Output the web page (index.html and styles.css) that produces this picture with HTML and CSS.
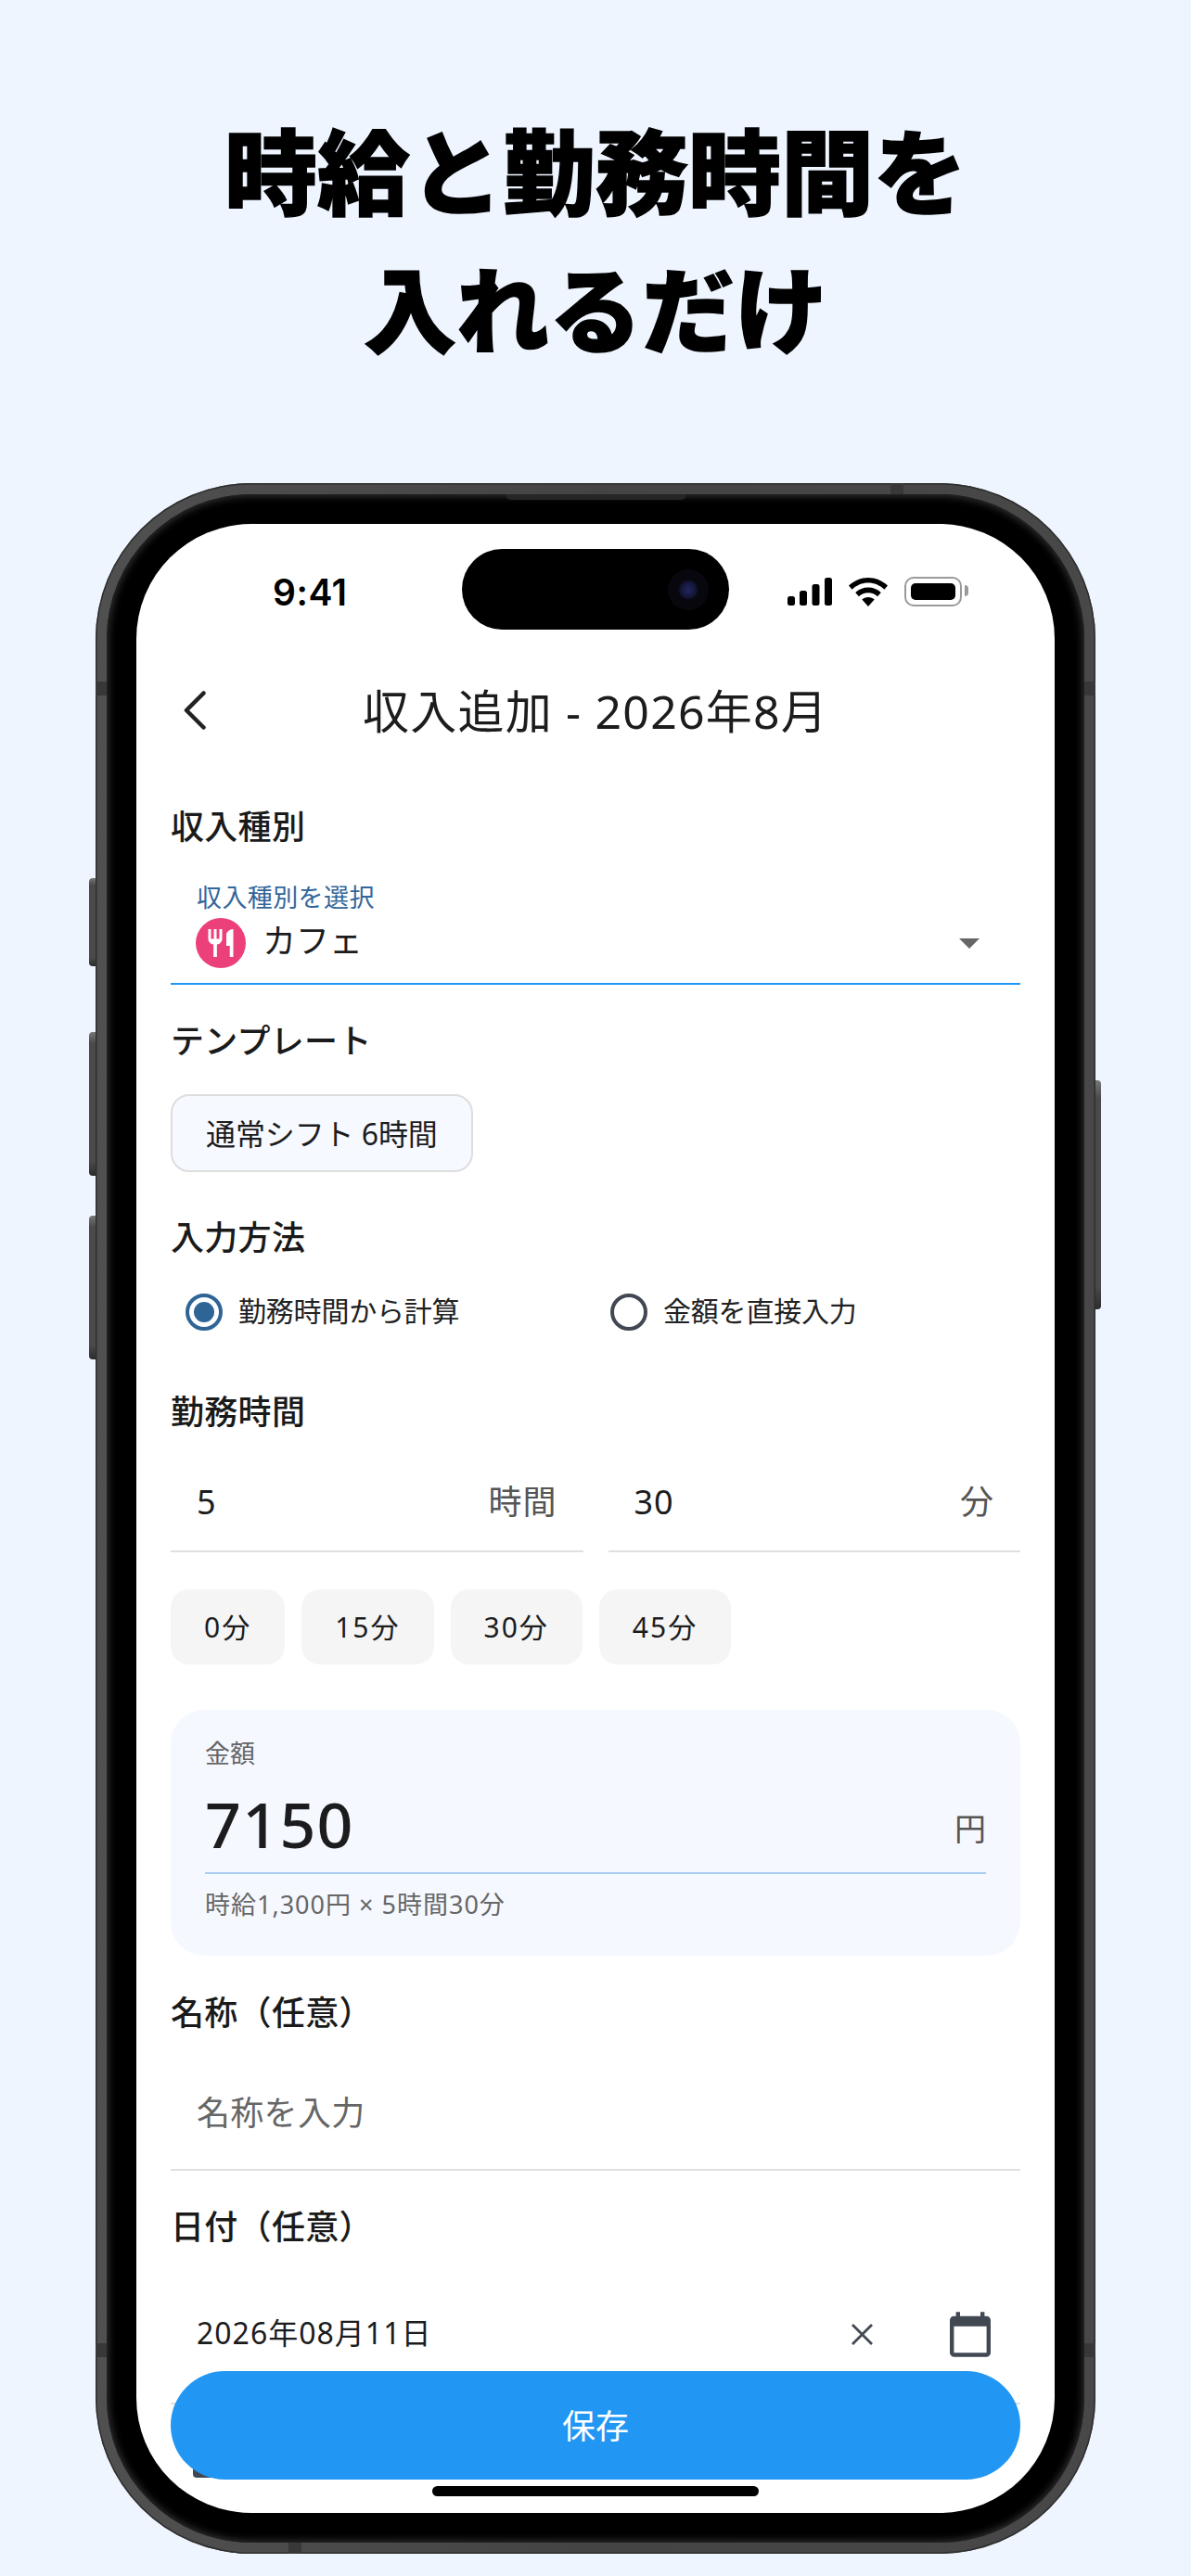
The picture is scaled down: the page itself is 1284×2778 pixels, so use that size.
FILE: index.html
```html
<!DOCTYPE html>
<html lang="ja">
<head>
    <meta charset="UTF-8">
    <meta name="viewport" content="width=device-width, initial-scale=1.0">
    <title>収入追加</title>
    <link rel="stylesheet" href="styles.css">
</head>
<body>

    <h1 class="headline">時給と勤務時間を<br>入れるだけ</h1>

    <div class="phone">
        <!-- hardware details on the frame -->
        <span class="side-btn side-mute"></span>
        <span class="side-btn side-up"></span>
        <span class="side-btn side-down"></span>
        <span class="side-btn side-power"></span>
        <span class="band band-left"></span>
        <span class="band band-right"></span>
        <span class="band band-left-low"></span>
        <span class="band band-right-low"></span>
        <span class="band band-top"></span>
        <span class="band band-bottom"></span>

        <div class="bezel">
            <span class="speaker"></span>
            <div class="screen">
                <div class="island"><span class="lens"></span></div>

                <div class="status-bar">
                    <span class="clock">9:41</span>
                    <div class="status-icons">
                        <svg class="icon-signal" viewBox="0 0 48 30">
                            <rect x="0" y="20" width="8" height="10" rx="2.5"/>
                            <rect x="13" y="14" width="8" height="16" rx="2.5"/>
                            <rect x="26.500" y="7" width="8" height="23" rx="2.5"/>
                            <rect x="40" y="0" width="8" height="30" rx="2.5"/>
                        </svg>
                        <svg class="icon-wifi" viewBox="0 0 42 31">
                            <path d="M21 0C13 0 6 3.100 0 8.500l3.600 4.200C8.600 8.200 14.500 5.600 21 5.600s12.400 2.600 17.400 7.100L42 8.500C36 3.100 29 0 21 0z"/>
                            <path d="M21 10.500c-5.300 0-10 2-13.800 5.400l3.700 4.300c2.800-2.400 6.200-3.900 10.100-3.900s7.300 1.500 10.100 3.900l3.700-4.300C31 12.500 26.300 10.500 21 10.500z"/>
                            <path d="M21 21c-2.600 0-4.900.9-6.700 2.500L21 31l6.700-7.500C25.900 21.900 23.600 21 21 21z"/>
                        </svg>
                        <div class="battery"><span class="battery-fill"></span></div>
                    </div>
                </div>

                <div class="nav">
                    <svg class="back" viewBox="0 0 24 42">
                        <path d="M21.500 2.500 3 21l18.500 18.500" fill="none" stroke="#222" stroke-width="4.500" stroke-linecap="round" stroke-linejoin="round"/>
                    </svg>
                    <div class="nav-title">収入追加 - 2026年8月</div>
                </div>

                <div class="form">
                    <div class="label label-type">収入種別</div>
                    <div class="select">
                        <div class="select-label">収入種別を選択</div>
                        <div class="select-row">
                            <span class="cat-icon">
                                <svg viewBox="0 0 24 24"><path d="M11 9H9V2H7v7H5V2H3v7c0 2.120 1.660 3.840 3.750 3.970V22h2.500v-9.030C11.340 12.840 13 11.120 13 9V2h-2v7zm5-3v8h2.500v8H21V2c-2.760 0-5 2.240-5 4z"/></svg>
                            </span>
                            <span class="select-value">カフェ</span>
                            <span class="caret"></span>
                        </div>
                    </div>

                    <div class="label label-template">テンプレート</div>
                    <div class="template-chip">通常シフト 6時間</div>

                    <div class="label label-method">入力方法</div>
                    <div class="radios">
                        <div class="radio-item">
                            <span class="radio radio-on"></span>
                            <span class="radio-text">勤務時間から計算</span>
                        </div>
                        <div class="radio-item">
                            <span class="radio"></span>
                            <span class="radio-text">金額を直接入力</span>
                        </div>
                    </div>

                    <div class="label label-hours">勤務時間</div>
                    <div class="time-fields">
                        <div class="time-field"><span>5</span><span class="suffix">時間</span></div>
                        <div class="time-field"><span>30</span><span class="suffix">分</span></div>
                    </div>
                    <div class="quick-chips">
                        <div class="quick-chip">0分</div>
                        <div class="quick-chip">15分</div>
                        <div class="quick-chip">30分</div>
                        <div class="quick-chip">45分</div>
                    </div>

                    <div class="amount-card">
                        <div class="amount-label">金額</div>
                        <div class="amount-row">
                            <span class="amount-value">7150</span>
                            <span class="amount-unit">円</span>
                        </div>
                        <div class="amount-hint">時給1,300円 × 5時間30分</div>
                    </div>

                    <div class="label label-name">名称（任意）</div>
                    <div class="text-field">名称を入力</div>

                    <div class="label label-date">日付（任意）</div>
                    <div class="date-field">
                        <span class="date-value">2026年08月11日</span>
                        <svg class="icon-clear" viewBox="0 0 25 25">
                            <path d="M2 2l21 21M23 2 2 23" fill="none" stroke="#424852" stroke-width="2.800"/>
                        </svg>
                        <svg class="icon-calendar" viewBox="2 1 20 22">
                            <path fill="#424852" d="M20 3h-1V1h-2v2H7V1H5v2H4c-1.100 0-2 .9-2 2v16c0 1.100.9 2 2 2h16c1.100 0 2-.9 2-2V5c0-1.100-.9-2-2-2zm0 18H4V8h16v13z"/>
                        </svg>
                    </div>
                    <div class="next-peek"></div>
                </div>

                <div class="save-btn">保存</div>
                <span class="home-bar"></span>
            </div>
        </div>
    </div>

</body>
</html>
```

FILE: styles.css
```css
* {
    box-sizing: border-box;
}

html, body {
    margin: 0;
    height: 2778px;
    overflow: hidden;
}

body {
    background: #eef5ff;
    font-family: "Noto Sans", "Noto Sans CJK JP", sans-serif;
    color: #1c1c1e;
    padding-top: 106px;
}

.headline {
    margin: 0;
    font-family: "Noto Sans CJK JP", sans-serif;
    font-size: 100px;
    font-weight: 900;
    line-height: 149px;
    text-align: center;
    color: #000;
    -webkit-text-stroke: 1.5px #000;
}

/* phone frame */
.phone {
    position: relative;
    width: 1078px;
    height: 2233px;
    margin: 117px 0 0 103px;
    padding: 12px;
    border-radius: 168px;
    background: linear-gradient(90deg, #505050, #444 50%, #484848);
    box-shadow: inset 0 0 0 1.500px #2e2e2e;
}

.bezel {
    position: relative;
    height: 100%;
    padding: 32px;
    border-radius: 156px;
    background: #000;
    box-shadow: inset 0 0 9px 2px #333;
}

.speaker {
    position: absolute;
    top: 0;
    left: 430px;
    width: 195px;
    height: 6px;
    border-radius: 0 0 6px 6px;
    background: #262626;
}

.side-btn {
    position: absolute;
    left: -7px;
    width: 7px;
    height: 155px;
    border-radius: 4px 0 0 4px;
    background: linear-gradient(180deg, #777, #4a4a4a 8%, #4a4a4a 90%, #2c2c2c);
}

.side-mute {
    top: 426px;
    height: 95px;
}

.side-up {
    top: 592px;
}

.side-down {
    top: 790px;
}

.side-power {
    left: auto;
    right: -6px;
    top: 644px;
    width: 6px;
    height: 247px;
    border-radius: 0 4px 4px 0;
}

.band {
    position: absolute;
    background: #383838;
}

.band-left, .band-right, .band-left-low, .band-right-low {
    width: 12px;
    height: 15px;
}

.band-left {
    left: 0;
    top: 214px;
}

.band-right {
    right: 0;
    top: 214px;
}

.band-left-low {
    left: 0;
    top: 2006px;
}

.band-right-low {
    right: 0;
    top: 2006px;
}

.band-top {
    top: 0;
    left: 857px;
    width: 14px;
    height: 12px;
}

.band-bottom {
    bottom: 0;
    left: 208px;
    width: 14px;
    height: 12px;
}

/* screen */
.screen {
    position: relative;
    height: 100%;
    overflow: hidden;
    border-radius: 124px;
    background: #fff;
}

.island {
    position: absolute;
    top: 27px;
    left: 351px;
    width: 288px;
    height: 87px;
    border-radius: 44px;
    background: #000;
}

.lens {
    position: absolute;
    top: 22px;
    right: 22px;
    width: 44px;
    height: 44px;
    border-radius: 50%;
    background: radial-gradient(circle, #20275c 0, #141638 26%, #08070e 36%);
}

.status-bar {
    display: flex;
    align-items: center;
    justify-content: space-between;
    height: 146px;
    padding: 0 100px 0 147px;
}

.clock {
    font-family: Inter, sans-serif;
    font-size: 39px;
    font-weight: 600;
    letter-spacing: 0.5px;
    color: #000;
}

.status-icons {
    display: flex;
    align-items: center;
    gap: 18px;
}

.icon-signal {
    width: 48px;
    height: 30px;
}

.icon-wifi {
    width: 42px;
    height: 31px;
}

.battery {
    position: relative;
    width: 62px;
    height: 32px;
    padding: 5px;
    border: 2.500px solid #9a9a9a;
    border-radius: 10px;
}

.battery::after {
    content: "";
    position: absolute;
    top: 7px;
    right: -9px;
    width: 4px;
    height: 12px;
    border-radius: 0 4px 4px 0;
    background: #9a9a9a;
}

.battery-fill {
    display: block;
    height: 100%;
    border-radius: 5px;
    background: #000;
}

.nav {
    display: grid;
    grid-template-columns: 1fr auto 1fr;
    align-items: center;
    height: 110px;
    padding: 0 51px;
}

.back {
    width: 24px;
    height: 42px;
}

.nav-title {
    padding-bottom: 4px;
    font-size: 50px;
    letter-spacing: 1.2px;
    color: #1c1c1e;
}

/* form */
.form {
    padding: 0 37px;
}

.label {
    font-size: 36px;
    font-weight: 500;
    letter-spacing: 0.3px;
    line-height: 48px;
    color: #1a1a1a;
}

.label-type {
    margin-top: 47px;
}

.label-template {
    margin-top: 37px;
}

.label-method {
    margin-top: 47px;
}

.label-hours {
    margin-top: 64px;
}

.label-name {
    margin-top: 38px;
}

.label-date {
    margin-top: 37px;
}

.select {
    margin-top: 35px;
    padding: 0 28px 16px;
    border-bottom: 2px solid #2196f3;
}

.select-label {
    font-size: 27px;
    letter-spacing: 0.4px;
    line-height: 34px;
    color: #33669a;
}

.select-row {
    display: flex;
    align-items: center;
    height: 54px;
    margin: 5px 0 0 -1px;
}

.cat-icon {
    display: flex;
    align-items: center;
    justify-content: center;
    width: 54px;
    height: 54px;
    border-radius: 50%;
    background: #ec407a;
}

.cat-icon svg {
    width: 36px;
    height: 36px;
    fill: #fff;
}

.select-value {
    margin-left: 18px;
    padding-bottom: 5px;
    font-size: 36px;
    line-height: 44px;
}

.caret {
    margin-left: auto;
    margin-right: 16px;
    border-left: 11px solid transparent;
    border-right: 11px solid transparent;
    border-top: 11px solid #666;
}

.template-chip {
    display: inline-flex;
    align-items: center;
    height: 84px;
    margin-top: 33px;
    padding: 0 36px 2px;
    border: 2px solid #ddd;
    border-radius: 20px;
    background: #f6f9ff;
    font-size: 32px;
    letter-spacing: -0.1px;
}

.radios {
    display: flex;
    margin-top: 36px;
}

.radio-item {
    display: flex;
    align-items: center;
    gap: 17px;
    width: 458px;
    height: 40px;
    padding-left: 16px;
    font-size: 30px;
    letter-spacing: -0.2px;
    color: #222;
}

.radio-text {
    padding-bottom: 3px;
    line-height: 34px;
}

.radio {
    width: 40px;
    height: 40px;
    border: 4px solid #424852;
    border-radius: 50%;
}

.radio-on {
    padding: 5px;
    border-color: #2f6496;
    background: #2f6496 content-box;
}

.time-fields {
    display: flex;
    gap: 27px;
    margin-top: 48px;
}

.time-field {
    display: flex;
    flex: 1;
    justify-content: space-between;
    padding: 0 28px 27px;
    border-bottom: 2px solid #e0e0e0;
    font-size: 36px;
    letter-spacing: 1px;
    line-height: 50px;
}

.suffix {
    color: #555;
}

.quick-chips {
    display: flex;
    gap: 18px;
    margin-top: 40px;
}

.quick-chip {
    display: flex;
    align-items: center;
    height: 81px;
    padding: 0 36px 3px;
    border-radius: 20px;
    background: #f5f5f5;
    font-size: 30px;
    letter-spacing: 2px;
}

.amount-card {
    height: 265px;
    margin-top: 49px;
    padding: 30px 37px 0;
    border-radius: 36px;
    background: #f5f8ff;
}

.amount-label {
    font-size: 27px;
    line-height: 34px;
    color: #666;
}

.amount-row {
    display: flex;
    align-items: center;
    justify-content: space-between;
    height: 96px;
    margin-top: 17px;
    padding-bottom: 10px;
    border-bottom: 2px solid #a9cdf0;
}

.amount-value {
    font-size: 68px;
    font-weight: 500;
    letter-spacing: 1.3px;
    line-height: 84px;
    color: #1c1c1e;
}

.amount-unit {
    padding-top: 10px;
    font-size: 34px;
    line-height: 60px;
    color: #555;
}

.amount-hint {
    margin-top: 16px;
    font-size: 27px;
    letter-spacing: 1px;
    line-height: 34px;
    color: #666;
}

.text-field {
    margin-top: 59px;
    padding: 0 28px 35px;
    border-bottom: 2px solid #e0e0e0;
    font-size: 36px;
    letter-spacing: 0.3px;
    line-height: 50px;
    color: #666;
}

.date-field {
    display: flex;
    align-items: center;
    margin-top: 65px;
    padding: 0 32px 48px 28px;
    border-bottom: 2px solid #e0e0e0;
    line-height: 50px;
}

.date-value {
    flex: 1;
    padding-bottom: 2px;
    font-size: 32px;
    letter-spacing: 1px;
}

.icon-clear {
    width: 25px;
    height: 25px;
    margin-right: 82px;
}

.icon-calendar {
    width: 44px;
    height: 49px;
}

.next-peek {
    width: 40px;
    height: 10px;
    margin: 69px 0 0 24px;
    border-radius: 0 0 0 4px;
    background: #424852;
}

.save-btn {
    position: absolute;
    left: 37px;
    top: 1992px;
    display: flex;
    align-items: center;
    justify-content: center;
    width: 916px;
    height: 117px;
    padding-bottom: 3px;
    border-radius: 59px;
    background: #2196f3;
    font-size: 36px;
    color: #fff;
}

.home-bar {
    position: absolute;
    left: 319px;
    top: 2116px;
    width: 352px;
    height: 11px;
    border-radius: 6px;
    background: #000;
}
```
